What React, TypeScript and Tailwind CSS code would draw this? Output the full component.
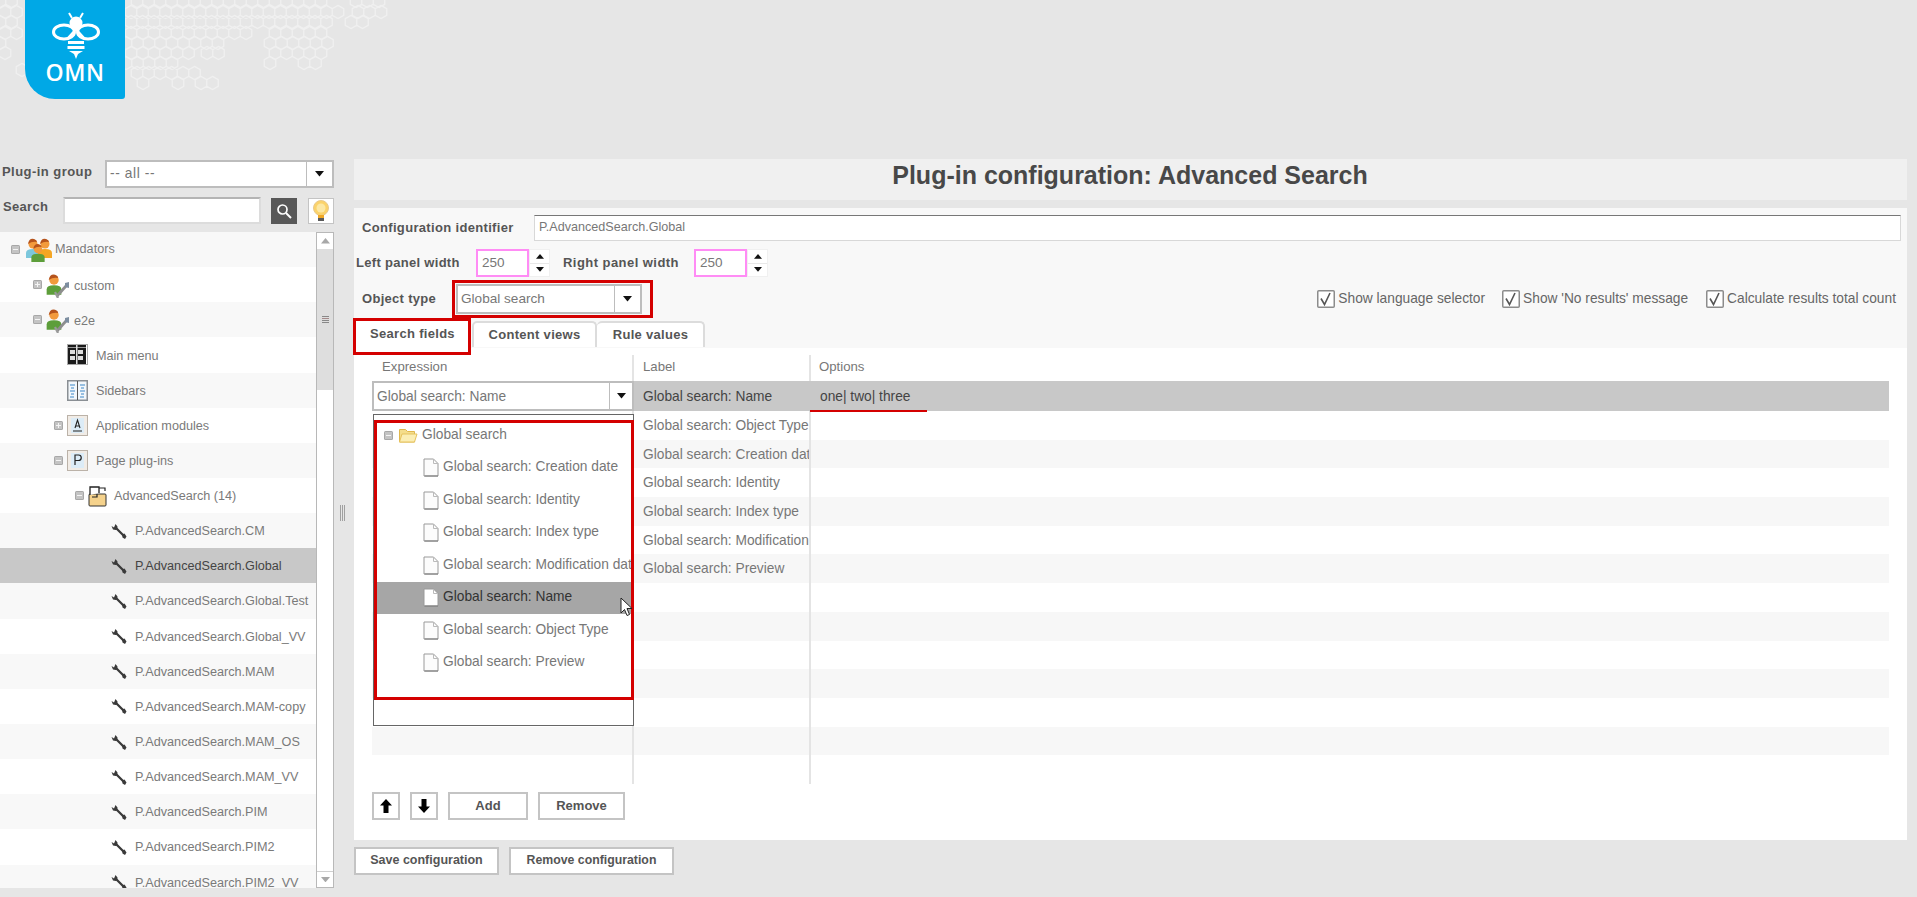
import React from "react";

const HEX_ROWS: [number, [number, number][]][] = [
  [1, [[137, 323], [356, 380]]],
  [12, [[131, 340], [358, 386]]],
  [22, [[131, 335], [351, 370]]],
  [33, [[131, 248], [275, 330]]],
  [43, [[126, 220], [270, 335]]],
  [53, [[131, 190], [207, 220], [275, 326]]],
  [63, [[126, 180], [270, 272], [304, 322]]],
  [73, [[137, 205]]],
  [83, [[143, 143], [178, 178], [201, 213]]],
  [1, [[0, 20]]],
  [12, [[5, 20]]],
  [22, [[0, 20]]],
  [33, [[5, 18]]],
  [43, [[0, 10]]],
  [53, [[5, 5]]],
  [70, [[22, 22]]],
];

function hexPath() {
  let d = "";
  for (const [y, spans] of HEX_ROWS) {
    for (const [a, b] of spans) {
      for (let x = a; x <= b + 0.1; x += 11.5) {
        const w = 5.75;
        const h = 6.6;
        d += `M${x} ${y - h}L${x + w} ${y - h / 2}L${x + w} ${y + h / 2}L${x} ${y + h}L${x - w} ${y + h / 2}L${x - w} ${y - h / 2}Z`;
      }
    }
  }
  return d;
}

function Logo() {
  return (
    <div className="absolute left-[25px] top-0 w-[100px] h-[99px] bg-[#00a8e6] rounded-bl-[30px] rounded-br-[3px] flex flex-col items-center">
      <svg width="50" height="48" viewBox="0 0 50 48" className="mt-[12px] ml-[1px]">
        <path d="M18 1l3 5M32 1l-3 5" stroke="#fff" strokeWidth="2" />
        <circle cx="25" cy="11" r="6.500" fill="#fff" />
        <ellipse cx="13" cy="20" rx="10.500" ry="7" fill="none" stroke="#fff" strokeWidth="3" />
        <ellipse cx="37" cy="20" rx="10.500" ry="7" fill="none" stroke="#fff" strokeWidth="3" />
        <path d="M17 29h16v3H17zM16.500 34h17v3h-17zM18 39h14l-5 3-2 5-2-5z" fill="#fff" />
        <path d="M16 27L25 17L34 27" fill="none" stroke="#fff" strokeWidth="2" />
      </svg>
      <div className="text-[23px] leading-[24px] tracking-[0.5px] text-white font-['Open_Sans',sans-serif] font-semibold">OMN</div>
    </div>
  );
}

function Arrow({ up = false, color = "#111", w = 8 }: { up?: boolean; color?: string; w?: number }) {
  return (
    <svg width={w} height={w * 0.6} viewBox="0 0 10 6">
      <path d={up ? "M0 6L5 0L10 6Z" : "M0 0L5 6L10 0Z"} fill={color} />
    </svg>
  );
}

function Select({ value, className, btn = 26, text = "text-[13.75px]" }: { value: string; className: string; btn?: number; text?: string }) {
  return (
    <div className={"flex bg-white border-2 border-[#bdbdbd] " + className}>
      <div className={"flex-1 flex items-center pl-[3px] text-[#777] whitespace-nowrap overflow-hidden " + text}>{value}</div>
      <div className="flex items-center justify-center border-l border-[#bdbdbd] shrink-0" style={{ width: btn }}>
        <Arrow w={9} />
      </div>
    </div>
  );
}

function Expander({ plus = false }: { plus?: boolean }) {
  return (
    <svg width="9" height="9" viewBox="0 0 9 9" className="shrink-0">
      <rect x="0" y="0" width="9" height="9" rx="1.500" fill="#a8a8a8" />
      <rect x="1" y="1" width="7" height="7" fill="#c4c4c4" />
      <path d={plus ? "M2 4.500h5M4.500 2v5" : "M2 4.500h5"} stroke="#f4f4f4" strokeWidth="1" />
    </svg>
  );
}

function Person({ x, y, s, shirt }: { x: number; y: number; s: number; shirt: string }) {
  return (
    <g>
      <path d={`M${x - 7 * s} ${y + 14 * s}v${-5 * s}q0 ${-4 * s} ${7 * s} ${-4 * s}q${7 * s} 0 ${7 * s} ${4 * s}v${5 * s}z`} fill={shirt} />
      <circle cx={x} cy={y} r={4.500 * s} fill="#f29a3c" />
      <path d={`M${x - 5 * s} ${y}q${1 * s} ${-6 * s} ${6 * s} ${-5 * s}q${3 * s} 1 ${3 * s} ${3 * s}q${-5 * s} ${-1 * s} ${-9 * s} ${2 * s}z`} fill="#b5531c" />
    </g>
  );
}

function Group() {
  return (
    <svg width="26" height="24" viewBox="0 0 26 24" className="shrink-0">
      <Person x={7} y={6} s={1} shirt="#7cc7dc" />
      <Person x={19} y={6} s={1} shirt="#f5a623" />
      <Person x={12} y={11} s={0.95} shirt="#5d9e3a" />
    </svg>
  );
}

function Wrench({ c = "#3a3a3a" }: { c?: string }) {
  return (
    <svg width="16" height="16" viewBox="0 0 16 16" className="shrink-0">
      <path d="M0.500 3L3 4.500L4.500 1L6.500 3.500L6.300 6L4.800 7L2 6.500Z" fill={c} />
      <path d="M5 5L12.500 12.500" stroke={c} strokeWidth="2.300" />
      <path d="M11 11.500l2.500-1 2 3-1.500 2.500-2.500-1.500z" fill={c} />
    </svg>
  );
}

function PersonTool() {
  return (
    <svg width="24" height="26" viewBox="0 0 24 26" className="shrink-0">
      <Person x={8} y={8} s={1.050} shirt="#5d9e3a" />
      <path d="M11 24L20 14" stroke="#8e8e8e" strokeWidth="2.800" />
      <path d="M19 11l4-1v6l-4-1z" fill="#7d8ea0" />
      <path d="M9 20l3 6" stroke="#9a9a9a" strokeWidth="2.200" />
    </svg>
  );
}

function BoxIcon({ kind }: { kind: "menu" | "side" | "A" | "P" }) {
  if (kind === "menu")
    return (
      <svg width="21" height="21" viewBox="0 0 21 21" className="shrink-0">
        <rect x="0.500" y="0.500" width="20" height="20" fill="#fff" stroke="#aaa" />
        <rect x="1" y="1" width="18" height="19" fill="#1b1b1b" />
        <rect x="3" y="6" width="5" height="4" fill="#ddd" />
        <rect x="11" y="6" width="5" height="4" fill="#ddd" />
        <rect x="3" y="12" width="5" height="4" fill="#ddd" />
        <rect x="11" y="12" width="5" height="4" fill="#ddd" />
        <rect x="1" y="3" width="18" height="1" fill="#999" />
        <rect x="9" y="1" width="1.500" height="19" fill="#ddd" />
      </svg>
    );
  if (kind === "side")
    return (
      <svg width="21" height="21" viewBox="0 0 21 21" className="shrink-0">
        <rect x="0.750" y="0.750" width="19.500" height="19.500" fill="#f2f7fb" stroke="#8a8f94" strokeWidth="1.500" />
        <path d="M10.500 1v19" stroke="#555" />
        <path d="M3 5h5M4 8h3M3 11h5M4 14h3M3 17h4M13 5h5M14 8h3M13 11h5M14 14h3M13 17h4" stroke="#3c88c8" strokeWidth="1.200" />
      </svg>
    );
  return (
    <svg width="21" height="21" viewBox="0 0 21 21" className="shrink-0">
      <rect x="0.500" y="0.500" width="20" height="20" fill="#f1ece6" stroke="#bbb2a8" />
      <rect x="4" y="3" width="13" height="15" fill="#dcecf7" />
      {kind === "A" ? (
        <path d="M6 16h9M8 13L10.500 5L13 13M8.500 11h4" fill="none" stroke="#222" strokeWidth="1.100" />
      ) : (
        <path d="M8 15V5h3.500a2.500 2.500 0 0 1 0 5.500H8" fill="none" stroke="#222" strokeWidth="1.200" />
      )}
    </svg>
  );
}

function PackIcon() {
  return (
    <svg width="20" height="22" viewBox="0 0 20 22" className="shrink-0">
      <rect x="1" y="9" width="17" height="12" rx="1" fill="#f5d28c" stroke="#333" />
      <path d="M2 10V2h9v6" fill="#fff" stroke="#222" strokeWidth="1.300" />
      <path d="M11 3h6v3" fill="none" stroke="#222" strokeWidth="1.200" />
      <path d="M4 12h5v-3" fill="none" stroke="#222" strokeWidth="1.200" />
    </svg>
  );
}

function Doc({ white = false }: { white?: boolean }) {
  return (
    <svg width="16" height="19" viewBox="0 0 16 19" className="shrink-0">
      <path d="M1 1h9.500L15 5.500V18H1z" fill={white ? "#fff" : "#fcfcfc"} stroke="#9a9a9a" />
      <path d="M10.500 1v4.500H15" fill="none" stroke="#bbb" />
      <path d="M1.500 18h13.500" stroke="#777" />
    </svg>
  );
}

function Folder() {
  return (
    <svg width="19" height="15" viewBox="0 0 19 15" className="shrink-0">
      <path d="M0.500 14V1.500h6l2 2h7V14z" fill="#f4dd8b" stroke="#e0b74c" />
      <path d="M3 6h15l-2.500 8H0.500z" fill="#fbeeb4" stroke="#e6c35e" />
    </svg>
  );
}

type Tree = { label: string; x: number; exp?: "p" | "m"; icon: React.ReactNode; sel?: boolean; tx: number };

const tree: Tree[] = [
  { label: "Mandators", x: 11, exp: "m", icon: <Group />, tx: 55 },
  { label: "custom", x: 33, exp: "p", icon: <PersonTool />, tx: 74 },
  { label: "e2e", x: 33, exp: "m", icon: <PersonTool />, tx: 74 },
  { label: "Main menu", x: 54, icon: <BoxIcon kind="menu" />, tx: 96 },
  { label: "Sidebars", x: 54, icon: <BoxIcon kind="side" />, tx: 96 },
  { label: "Application modules", x: 54, exp: "p", icon: <BoxIcon kind="A" />, tx: 96 },
  { label: "Page plug-ins", x: 54, exp: "m", icon: <BoxIcon kind="P" />, tx: 96 },
  { label: "AdvancedSearch (14)", x: 75, exp: "m", icon: <PackIcon />, tx: 114 },
  ...["CM", "Global", "Global.Test", "Global_VV", "MAM", "MAM-copy", "MAM_OS", "MAM_VV", "PIM", "PIM2", "PIM2_VV"].map((s) => ({
    label: "P.AdvancedSearch." + s,
    x: 96,
    icon: <Wrench />,
    tx: 135,
    sel: s === "Global",
  })),
];

function TreeRow({ r, i }: { r: Tree; i: number }) {
  const bg = r.sel ? "bg-[#c8c8c8] text-[#444]" : i % 2 === 0 ? "bg-[#f8f8f8] text-[#7a7a7a]" : "bg-white text-[#7a7a7a]";
  const gap = r.tx === 55 || r.tx >= 135 ? 6 : 4;
  const pad = i === 0 ? "" : i < 5 ? "pt-[3px]" : "pt-[2px]";
  return (
    <div className={"h-[35.15px] flex items-center shrink-0 whitespace-nowrap text-[12.65px] " + bg} style={{ paddingLeft: r.x }}>
      <div className="w-[9px] shrink-0">{r.exp === "m" ? <Expander /> : r.exp === "p" ? <Expander plus /> : null}</div>
      <div className="shrink-0 flex items-center" style={{ marginLeft: gap, width: r.tx - r.x - 9 - gap }}>
        {r.icon}
      </div>
      <div className={pad}>{r.label}</div>
    </div>
  );
}

function Spin() {
  return (
    <div className="flex flex-col w-[21px] h-[28px] border border-[#f0f0f0] bg-white">
      <div className="flex-1 flex items-center justify-center border-b border-[#e8e8e8]"><Arrow up w={8} /></div>
      <div className="flex-1 flex items-center justify-center"><Arrow w={8} /></div>
    </div>
  );
}

function Check({ label, className = "" }: { label: string; className?: string }) {
  return (
    <div className={"flex items-center gap-[3px] " + className}>
      <svg width="18" height="18" viewBox="0 0 18 18" className="shrink-0">
        <rect x="0.750" y="0.750" width="16.500" height="16.500" rx="1" fill="#fff" stroke="#8c8c8c" strokeWidth="1.500" />
        <path d="M4 8.500l3.500 6L13 3" fill="none" stroke="#555" strokeWidth="1.600" />
      </svg>
      <span className="text-[13.75px] text-[#666] whitespace-nowrap">{label}</span>
    </div>
  );
}

function Btn({ children, className = "" }: { children: React.ReactNode; className?: string }) {
  return (
    <div className={"flex items-center justify-center bg-white border-2 border-[#c4c4c4] font-bold text-[#555] " + className}>
      {children}
    </div>
  );
}

function ArrowBtn({ up = false }: { up?: boolean }) {
  return (
    <div className="flex items-center justify-center w-[28px] h-[28px] bg-white border-2 border-[#c4c4c4]">
      <svg width="12" height="14" viewBox="0 0 12 14">
        <path d={up ? "M6 0L12 6.500H8.500V14h-5V6.500H0Z" : "M6 14L12 7.500H8.500V0h-5V7.500H0Z"} fill="#000" />
      </svg>
    </div>
  );
}

const labels = ["Global search: Object Type", "Global search: Creation date", "Global search: Identity", "Global search: Index type", "Global search: Modification date", "Global search: Preview", "", "", "", "", "", "", ""];
const ddItems = ["Creation date", "Identity", "Index type", "Modification date", "Name", "Object Type", "Preview"];

export default function App() {
  return (
    <div className="relative w-[1917px] h-[897px] overflow-hidden bg-[#e6e6e6] font-['Liberation_Sans',Arial,sans-serif]">
      <div className="relative h-[159px]">
        <svg width="400" height="100" viewBox="0 0 400 100" className="absolute left-0 top-0">
          <path d={hexPath()} fill="none" stroke="#f0f0f0" strokeWidth="1.300" />
        </svg>
        <Logo />
      </div>
      <div className="flex items-start">
        <aside className="w-[334px] shrink-0 mt-[1px]">
          <div className="flex items-center h-[28px]">
            <span className="w-[106px] pl-[2px] font-bold text-[13px] tracking-[0.45px] text-[#555] -mt-[4px]">Plug-in group</span>
            <Select value="-- all --" className="w-[229px] h-[28px] shrink-0" text="text-[13.75px] tracking-[0.6px]" />
          </div>
          <div className="flex items-center h-[27px] mt-[9px]">
            <span className="w-[63px] pl-[3px] font-bold text-[13px] tracking-[0.3px] text-[#555] -mt-[8px]">Search</span>
            <div className="w-[199px] h-[27px] bg-white border-2 border-[#dcdcdc] border-t-[#b4b4b4]" />
            <div className="ml-[10px] w-[26px] h-[26px] bg-[#585858] flex items-center justify-center">
              <svg width="16" height="16" viewBox="0 0 16 16">
                <circle cx="6.500" cy="6.500" r="4.500" fill="none" stroke="#fff" strokeWidth="1.700" />
                <path d="M10 10l5 5" stroke="#fff" strokeWidth="2" />
              </svg>
            </div>
            <div className="ml-[11px] w-[26px] h-[26px] bg-white border border-[#c4c4c4] flex items-center justify-center">
              <svg width="18" height="22" viewBox="0 0 18 22">
                <circle cx="9" cy="8" r="7.500" fill="#fbd36a" stroke="#e8c98c" />
                <circle cx="9" cy="8" r="4.500" fill="#fce8a4" />
                <path d="M6 15h6v3H6z" fill="#f0a825" />
                <path d="M6 18h6v3H6z" fill="#5a5a5a" />
              </svg>
            </div>
          </div>
          <div className="flex h-[656px] mt-[8px] overflow-hidden">
            <div className="w-[316px] shrink-0 flex flex-col overflow-hidden">
              {tree.map((r, i) => (
                <TreeRow key={r.label} r={r} i={i} />
              ))}
            </div>
            <div className="w-[18px] shrink-0 bg-white border border-[#b8b8b8] flex flex-col">
              <div className="h-[16px] flex items-center justify-center"><Arrow up color="#a8a8a8" w={9} /></div>
              <div className="h-[141px] bg-[#dedede] flex flex-col items-center justify-center gap-[1px]">
                <div className="w-[7px] h-[1px] bg-[#888]" />
                <div className="w-[7px] h-[1px] bg-[#a58a8a]" />
                <div className="w-[7px] h-[1px] bg-[#888]" />
                <div className="w-[7px] h-[1px] bg-[#888]" />
              </div>
              <div className="flex-1" />
              <div className="h-[16px] flex items-center justify-center border-t border-[#cfcfcf]"><Arrow color="#a8a8a8" w={9} /></div>
            </div>
          </div>
        </aside>
        <div className="w-[20px] shrink-0 flex justify-start gap-[1px] mt-[346px] pl-[6px]">
          <div className="w-[1px] h-[16px] bg-[#a0a0a0]" />
          <div className="w-[1px] h-[16px] bg-[#a0a0a0]" />
          <div className="w-[1px] h-[16px] bg-[#a0a0a0]" />
        </div>
        <main className="w-[1553px] shrink-0 relative">
          <div className="h-[41px] bg-[#f0f0f0] flex items-center justify-center pb-[7px]">
            <h1 className="font-bold text-[25px] text-[#484848] -ml-[1px]">Plug-in configuration: Advanced Search</h1>
          </div>
          <div className="mt-[8px] h-[632px] bg-white relative">
            <div className="h-[140px] bg-[#f8f8f8]">
              <div className="flex items-center pt-[7px] pr-[6px]">
                <span className="w-[180px] pl-[8px] font-bold text-[13px] tracking-[0.33px] text-[#555] shrink-0 -mt-[1px]">Configuration identifier</span>
                <div className="flex-1 h-[26px] bg-white border border-[#d8d8d8] border-t-[#777] flex items-center pl-[4px] text-[12.6px] text-[#777] pb-[2px]">P.AdvancedSearch.Global</div>
              </div>
              <div className="flex items-center mt-[8px] h-[28px]">
                <span className="w-[122px] pl-[2px] font-bold text-[13px] tracking-[0.3px] text-[#555] shrink-0 -mt-[1px]">Left panel width</span>
                <div className="w-[53px] h-[28px] bg-white border-2 border-[#ff8cf5] flex items-center pl-[4px] text-[13.5px] text-[#777]">250</div>
                <Spin />
                <span className="ml-[13px] w-[131px] font-bold text-[13px] tracking-[0.45px] text-[#555] shrink-0 -mt-[1px]">Right panel width</span>
                <div className="w-[53px] h-[28px] bg-white border-2 border-[#ff8cf5] flex items-center pl-[4px] text-[13.5px] text-[#777]">250</div>
                <Spin />
              </div>
              <div className="flex items-center mt-[7px] h-[30px]">
                <span className="w-[102px] pl-[8px] font-bold text-[13px] tracking-[0.3px] text-[#555] shrink-0">Object type</span>
                <Select value="Global search" className="w-[186px] h-[30px]" text="text-[13.6px]" />
                <div className="flex-1" />
                <Check label="Show language selector" className="mr-[17px]" />
                <Check label="Show 'No results' message" className="mr-[18px]" />
                <Check label="Calculate results total count" className="mr-[11px]" />
              </div>
              <div className="flex items-start h-[27px] mt-[7px] relative">
                <div className="w-[116px] h-[33px] -mt-[1px] pb-[5px] pl-[1px] bg-white flex items-center justify-center font-bold text-[13px] tracking-[0.3px] text-[#555] rounded-t-[4px]">Search fields</div>
                <div className="ml-[2px] w-[125px] h-[26px] bg-white border-2 border-b-0 border-[#dcdcdc] rounded-t-[5px] flex items-center justify-center font-bold text-[13px] tracking-[0.3px] text-[#555]">Content views</div>
                <div className="w-[108px] h-[26px] pl-[1px] bg-white border-2 border-b-0 border-l-0 border-[#dcdcdc] rounded-t-[5px] flex items-center justify-center font-bold text-[13px] tracking-[0.3px] text-[#555]">Rule values</div>
              </div>
            </div>
            <div className="pt-[7px] px-[18px]">
              <div className="flex h-[26px] text-[13.2px] text-[#777]">
                <div className="w-[262px] pl-[10px] border-r-2 border-[#e4e4e4] flex items-center pb-[2px]">Expression</div>
                <div className="w-[177px] pl-[9px] border-r-2 border-[#e4e4e4] flex items-center pb-[2px]">Label</div>
                <div className="flex-1 pl-[8px] flex items-center pb-[2px]">Options</div>
              </div>
              <div className="flex h-[30px] bg-[#c8c8c8] text-[13.75px] text-[#444]">
                <Select value="Global search: Name" className="w-[262px] h-[30px] shrink-0 pt-0" btn={23} text="text-[13.75px] pt-[2px]" />
                <div className="w-[177px] pl-[9px] pt-[2px] flex items-center">Global search: Name</div>
                <div className="flex-1 pl-[9px] pt-[2px] flex items-center">one| two| three</div>
              </div>
              {labels.map((l, i) => (
                <div key={i} className={"flex h-[28.7px] text-[13.75px] text-[#777] " + (i % 2 === 1 ? "bg-[#f7f7f7]" : "bg-white")}>
                  <div className="w-[262px] border-r-2 border-[#e4e4e4]" />
                  <div className="w-[177px] pl-[9px] pr-[2px] pt-[2px] border-r-2 border-[#e4e4e4] flex items-center whitespace-nowrap overflow-hidden">{l}</div>
                  <div className="flex-1" />
                </div>
              ))}
              <div className="flex items-start gap-[10px] mt-[8px]">
                <ArrowBtn up />
                <ArrowBtn />
                <Btn className="w-[80px] h-[28px] text-[13px]">Add</Btn>
                <Btn className="w-[87px] h-[28px] text-[13px]">Remove</Btn>
              </div>
            </div>
            {/* dropdown tree menu */}
            <div className="absolute left-[19px] top-[206px] w-[261px] h-[312px] bg-white border border-[#666] pt-[4px] text-[13.75px] text-[#777]">
              <div className="h-[32.500px] flex items-center pl-[10px]">
                <Expander />
                <div className="ml-[6px]"><Folder /></div>
                <span className="ml-[4px]">Global search</span>
              </div>
              {ddItems.map((t) => (
                <div key={t} className={"h-[32.500px] flex items-center pl-[49px] whitespace-nowrap overflow-hidden mr-[1px] " + (t === "Name" ? "bg-[#a6a6a6] text-[#333]" : "")}>
                  <Doc white={t === "Name"} />
                  <span className="ml-[4px]">Global search: {t}</span>
                </div>
              ))}
            </div>
          </div>
          <div className="flex gap-[10px] mt-[7px]">
            <Btn className="w-[145px] h-[28px] text-[12.5px] pb-[2px]">Save configuration</Btn>
            <Btn className="w-[165px] h-[28px] text-[12.3px] pb-[2px]">Remove configuration</Btn>
          </div>
          {/* annotations */}
          <div className="absolute left-[98px] top-[121px] w-[201px] h-[38px] border-[3px] border-[#d40000]" />
          <div className="absolute left-[-1px] top-[159px] w-[118px] h-[37px] border-[3px] border-[#d40000]" />
          <div className="absolute left-[20px] top-[261px] w-[260px] h-[280px] border-[3px] border-[#d40000]" />
          <div className="absolute left-[456px] top-[251px] w-[117px] h-[2px] bg-[#d40000]" />
          <svg width="13" height="20" viewBox="0 0 13 20" className="absolute left-[266px] top-[438px]">
            <path d="M1 1v15l3.500-3.500 2.500 6 2.500-1-2.500-6h5z" fill="#fff" stroke="#222" strokeWidth="1" />
          </svg>
        </main>
      </div>
    </div>
  );
}
